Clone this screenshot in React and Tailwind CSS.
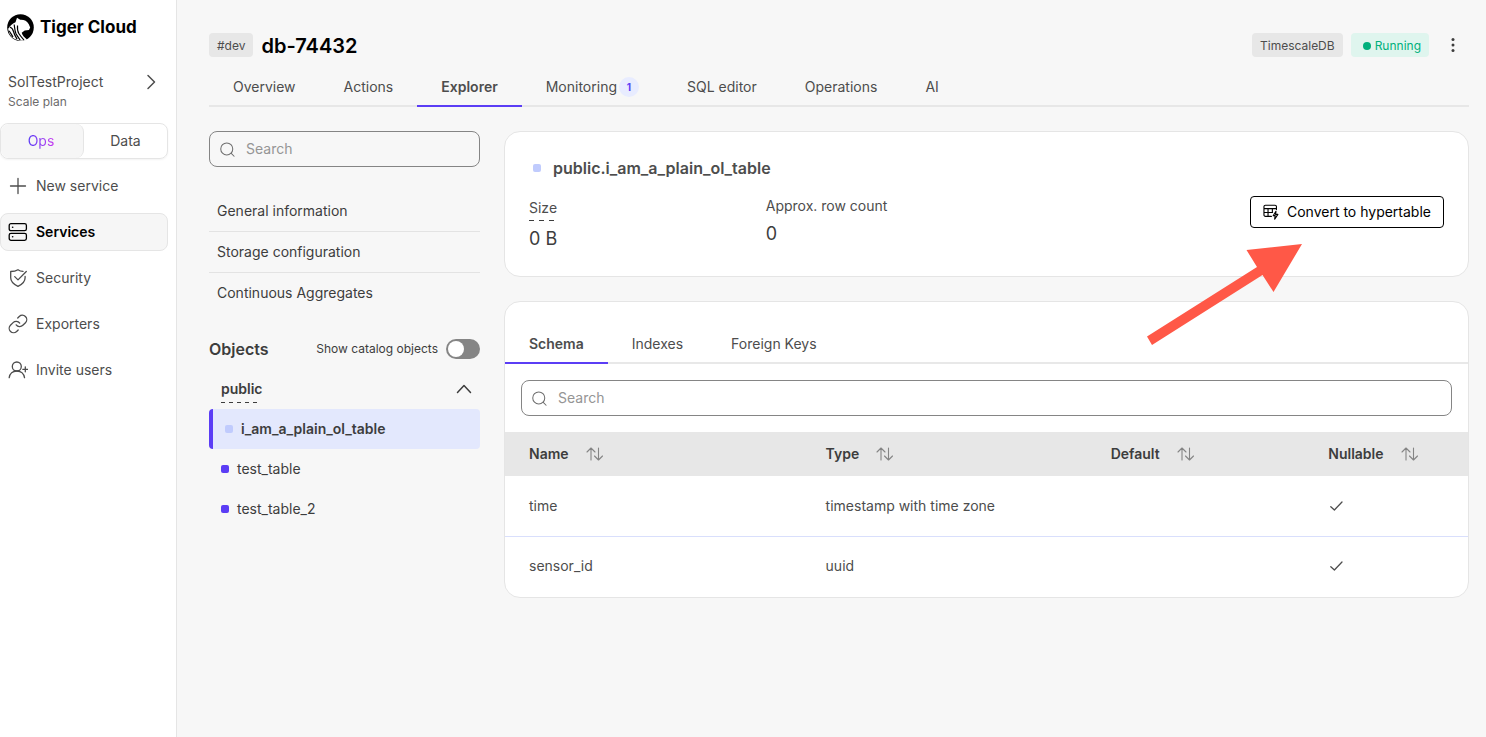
import React, { useState } from "react";

const columns = [
  { name: "Name", width: "w-[30.8%]" },
  { name: "Type", width: "w-[29.6%]" },
  { name: "Default", width: "w-[22.6%]" },
  { name: "Nullable", width: "" },
];

const rows = [
  { name: "time", type: "timestamp with time zone", nullable: true },
  { name: "sensor_id", type: "uuid", nullable: true },
];

const Icon = ({ size = 20, stroke = 1.3, className = "", children }) => (
  <svg
    width={size}
    height={size}
    viewBox="0 0 20 20"
    fill="none"
    stroke="currentColor"
    strokeWidth={stroke}
    strokeLinecap="round"
    strokeLinejoin="round"
    aria-hidden="true"
    className={`shrink-0 ${className}`}
  >
    {children}
  </svg>
);

const menu = [
  {
    name: "New service",
    icon: <path d="M10 2.5v15M2.5 10h15" />,
  },
  {
    name: "Services",
    icon: (
      <>
        <rect x="1.2" y="1.7" width="17.2" height="7" rx="1.8" />
        <rect x="1.2" y="11.3" width="17.2" height="7" rx="1.8" />
        <path d="M4.6 5.2h.1M4.6 14.8h.1" strokeWidth="1.6" />
      </>
    ),
  },
  {
    name: "Security",
    icon: (
      <>
        <path d="M15 3.4C12.8 3.3 11.4 2.7 10 1.7 8 3 5.6 3.5 2.7 3.5v6.2c0 4 3.2 6.7 7.3 8.6 4.1-1.9 7.1-4.6 7.1-8.6V8.5" />
        <path d="M6.7 8.6l3.3 3.3 8.3-8.4" />
      </>
    ),
  },
  {
    name: "Exporters",
    icon: (
      <g transform="translate(-.6 -.6) scale(.88)" strokeWidth="1.5">
        <path d="M10 13a5 5 0 0 0 7.540.54l3-3a5 5 0 0 0-7.070-7.070l-1.720 1.710" />
        <path d="M14 11a5 5 0 0 0-7.540-.54l-3 3a5 5 0 0 0 7.070 7.070l1.710-1.710" />
      </g>
    ),
  },
  {
    name: "Invite users",
    icon: (
      <>
        <circle cx="8.8" cy="6.5" r="4.5" />
        <path d="M1.2 17.7c.5-4 3.6-6.7 7.6-6.7s7.2 2.7 7.7 6.7M14.8 9.3h5M17.3 6.8v5" />
      </>
    ),
  },
];

const Logo = () => (
  <svg width="27" height="27" viewBox="0 0 27 27" aria-hidden="true" className="shrink-0">
    <circle cx="13.5" cy="13.5" r="13.3" fill="#000" />
    <path
      d="M10 3.8l3.2 1.9c4-.2 6.8 1.1 8.6 4.6l1.4 3.2-1.2 2.6-4.3.4-3 2.200c.6 2.400 2.400 4.400 5.300 6.800l-1.500.9C15 27.500 8 26.500 4.500 22.500 2.500 20.500 1.300 17.500 1.200 14.800 3 11.500 6 9.500 8.500 8.200z"
      fill="#fff"
    />
    <path
      d="M10.500 11.500c-.2 3-.3 5.500 1.300 8 1.200 2 3 4 5.200 6.500M7.200 10.500c.4 3 .5 6 1.600 8.700 1 2.300 2.500 4.200 4.400 6.800M2.800 13c2.300.7 3.200 2.300 3.700 4.500.7 3 2.200 5.200 3.600 7.700M1.600 16.800c1.800 1.200 2.400 3.400 4.400 6.200"
      fill="none"
      stroke="#000"
      strokeWidth="1.2"
    />
  </svg>
);

const SearchBox = ({ label }) => (
  <label className="flex h-9 items-center rounded-lg border border-[#858585] pl-2.5">
    <Icon size={15} stroke={1.4} className="text-[#6f6f6f]">
      <circle cx="9" cy="9.2" r="8" />
      <path d="M15 15.2l3.8 3.8" />
    </Icon>
    <span className="sr-only">{label}</span>
    <input
      type="text"
      placeholder="Search"
      className="h-6 min-w-0 flex-1 bg-transparent px-[11px] text-sm leading-6 outline-none placeholder:text-[#959595]"
    />
  </label>
);

const Tab = ({ name, active, onClick, children }) => (
  <button
    type="button"
    onClick={onClick}
    className={`-mb-0.5 flex h-10 items-center border-b-2 px-6 pt-0.5 text-sm text-[#4d4d4d] ${
      active ? "border-[#5b3df5] font-semibold" : "border-transparent"
    }`}
  >
    {name}
    {children}
  </button>
);

const Sidebar = () => (
  <aside className="w-[177px] shrink-0 border-r border-[#e5e5e5] bg-white pr-2 text-sm text-[#4d4d4d]">
    <div className="mt-3.5 flex items-center gap-1.5 pl-[7px] text-black">
      <Logo />
      <span className="text-[17px] leading-[27px] font-bold">Tiger Cloud</span>
    </div>

    <button type="button" className="mt-[31px] flex w-full justify-between pr-[7px] pl-2 text-left">
      <span>
        <span className="block leading-5">SolTestProject</span>
        <span className="block text-xs leading-5 text-[#6b6b6b]">Scale plan</span>
      </span>
      <Icon stroke={1.5}>
        <path d="M7 3.5l6.5 6.5L7 16.5" />
      </Icon>
    </button>

    <div className="mt-[11px] flex h-9 rounded-lg border border-[#e5e5e5] shadow-xs">
      <button type="button" className="w-1/2 rounded-lg border-r border-[#e5e5e5] bg-[#f6f6f6] pr-0.5">
        <span className="bg-linear-to-r from-[#5b3df5] to-[#c63bf0] bg-clip-text text-transparent">Ops</span>
      </button>
      <button type="button" className="w-1/2">Data</button>
    </div>

    <nav className="mt-2 flex flex-col gap-2">
      {menu.map(({ name, icon }) => (
        <a
          key={name}
          href="#"
          className={`flex h-[38px] items-center gap-2 rounded-lg border pl-[7px] ${
            name === "Services"
              ? "border-[#e5e5e5] bg-[#f6f6f6] font-semibold text-black"
              : "border-transparent"
          }`}
        >
          <Icon>{icon}</Icon>
          {name}
        </a>
      ))}
    </nav>
  </aside>
);

const ObjectList = () => {
  const [showCatalog, setShowCatalog] = useState(false);

  return (
    <div className="w-[271px] shrink-0 text-sm text-[#3d3d3d]">
      <SearchBox label="Search objects" />

      <ul className="mt-6 divide-y divide-[#e3e3e3]">
        {["General information", "Storage configuration", "Continuous Aggregates"].map((item) => (
          <li key={item}>
            <a href="#" className="flex h-10 items-center px-2">{item}</a>
          </li>
        ))}
      </ul>

      <div className="mt-5 flex h-8 items-center justify-between">
        <h2 className="text-base font-semibold">Objects</h2>
        <label className="flex items-center gap-2 text-xs">
          Show catalog objects
          <input
            type="checkbox"
            role="switch"
            checked={showCatalog}
            onChange={(e) => setShowCatalog(e.target.checked)}
            className="h-5 w-[34px] appearance-none rounded-full bg-[#858585] p-0.5 before:block before:size-4 before:rounded-full before:bg-white checked:bg-[#5b3df5] checked:before:translate-x-3.5"
          />
        </label>
      </div>

      <button type="button" className="mt-1 flex h-10 w-full items-center justify-between pr-1.5 pl-3">
        <span className="bg-[repeating-linear-gradient(90deg,#3d3d3d_0_4px,transparent_4px_8px)] bg-[length:37px_1px] bg-bottom-left bg-no-repeat py-1 font-semibold">
          public
        </span>
        <Icon stroke={1.5}>
          <path d="M3.5 13.5l6.5-7 6.5 7" />
        </Icon>
      </button>
      <a
        href="#"
        className="flex h-10 items-center gap-2 rounded border-l-4 border-[#5b3df5] bg-[#e3e8fd] pl-3 font-semibold"
      >
        <span className="size-2 rounded-xs bg-[#c0cbfd]" />
        i_am_a_plain_ol_table
      </a>
      {["test_table", "test_table_2"].map((table) => (
        <a key={table} href="#" className="flex h-10 items-center gap-2 pl-3">
          <span className="size-2 rounded-xs bg-[#5b3df5]" />
          {table}
        </a>
      ))}
    </div>
  );
};

const TableSummary = () => (
  <section className="rounded-2xl border border-[#e5e5e5] bg-white p-6 text-[#4d4d4d]">
    <div className="flex h-6 items-center gap-2">
      <span className="flex w-4 justify-center">
        <span className="size-2 rounded-xs bg-[#c0cbfd]" />
      </span>
      <h2 className="text-base font-semibold">public.i_am_a_plain_ol_table</h2>
    </div>
    <div className="mt-4 grid h-14 grid-cols-4 items-start gap-8 text-sm">
      <dl className="flex flex-col items-start gap-1">
        <dt className="bg-[repeating-linear-gradient(90deg,#3d3d3d_0_5px,transparent_5px_10px)] bg-[length:26px_1px] bg-bottom-left bg-no-repeat pb-px leading-6">
          Size
        </dt>
        <dd className="text-lg leading-7 text-[#3d3d3d]">0 B</dd>
      </dl>
      <dl className="flex flex-col items-start gap-1">
        <dt className="leading-5">Approx. row count</dt>
        <dd className="text-lg leading-7 text-[#3d3d3d]">0</dd>
      </dl>
      <button
        type="button"
        className="col-span-2 flex h-8 items-center gap-2 justify-self-end rounded border border-black px-3 text-black"
      >
        <Icon size={16} stroke={1.4}>
          <path d="M10.5 15.5H3A1.800 1.800 0 0 1 1.200 13.700V3.300A1.800 1.800 0 0 1 3 1.500h12a1.800 1.800 0 0 1 1.800 1.800V7M1.200 5.800h15.600M1.200 10.700h10.800M6.300 5.800v9.700M11.700 5.800v4" />
          <path d="M16.200 9l-3.500 5.600h2.500L14.600 19l4-6h-2.800z" />
        </Icon>
        Convert to hypertable
      </button>
    </div>
  </section>
);

const TableDetails = () => {
  const [tab, setTab] = useState("Schema");

  return (
    <section className="overflow-hidden rounded-2xl border border-[#e5e5e5] bg-white pb-px text-sm text-[#4d4d4d]">
      <div className="mt-[22px] flex border-b-2 border-[#e8e8e8]">
        {["Schema", "Indexes", "Foreign Keys"].map((name) => (
          <Tab key={name} name={name} active={tab === name} onClick={() => setTab(name)} />
        ))}
      </div>
      <div className="p-4">
        <SearchBox label="Search columns" />
      </div>
      <table className="w-full table-fixed text-left">
        <thead className="bg-[#e7e7e7] text-[#3d3d3d]">
          <tr className="h-11">
            {columns.map(({ name, width }) => (
              <th key={name} className={`pl-6 font-semibold ${width}`}>
                <span className="flex items-center gap-4">
                  {name}
                  <Icon stroke={1.1} className="text-[#858585]">
                    <path d="M6 16V4M2 8l4-4 4 4M13.5 4v12M9.5 12l4 4 4-4" />
                  </Icon>
                </span>
              </th>
            ))}
          </tr>
        </thead>
        <tbody className="divide-y divide-[#d9dffc]">
          {rows.map(({ name, type, nullable }) => (
            <tr key={name} className="h-[60px]">
              <td className="pl-6">{name}</td>
              <td className="pl-6">{type}</td>
              <td className="pl-6"></td>
              <td className="pl-6">
                {nullable && (
                  <Icon size={16} stroke={1.6}>
                    <path d="M3.5 11l4.5 4L17.5 5" />
                  </Icon>
                )}
              </td>
            </tr>
          ))}
        </tbody>
      </table>
    </section>
  );
};

const App = () => {
  const [tab, setTab] = useState("Explorer");
  const tabs = ["Overview", "Actions", "Explorer", "Monitoring", "SQL editor", "Operations", "AI"];

  return (
    <div className="flex min-h-screen bg-[#f7f7f7] font-['Inter',sans-serif]">
      <Sidebar />
      <main className="min-w-0 flex-1 pt-[33px] pr-[17px] pl-8">
        <header className="flex h-6 items-center gap-2 pr-2 text-xs">
          <span className="flex h-6 items-center rounded bg-[#e7e7e7] px-2 pt-px text-[#4d4d4d]">#dev</span>
          <h1 className="mr-auto pt-px text-xl font-semibold text-black">db-74432</h1>
          <span className="flex h-6 items-center rounded bg-[#e7e7e7] px-2 pt-px text-[#4d4d4d]">TimescaleDB</span>
          <span className="flex h-6 items-center gap-1 rounded bg-[#dff5ee] pt-px pr-2 pl-3 text-[#00b07c]">
            <span className="size-2 rounded-full bg-[#00b07c]" />
            Running
          </span>
          <button type="button" aria-label="More options" className="ml-2 text-[#3d3d3d]">
            <svg width="16" height="16" viewBox="0 0 16 16" fill="currentColor" aria-hidden="true">
              <circle cx="8" cy="2.5" r="1.5" />
              <circle cx="8" cy="8" r="1.5" />
              <circle cx="8" cy="13.5" r="1.5" />
            </svg>
          </button>
        </header>

        <nav className="mt-2.5 flex border-b-2 border-[#e7e7e7]">
          {tabs.map((name) => (
            <Tab key={name} name={name} active={tab === name} onClick={() => setTab(name)}>
              {name === "Monitoring" && (
                <span className="ml-0.5 flex size-5 items-center justify-center rounded-full bg-[#e8ecff] text-[10px] font-bold text-[#5b3df5]">
                  1
                </span>
              )}
            </Tab>
          ))}
        </nav>

        <div className="mt-6 flex items-start gap-6">
          <ObjectList />
          <div className="relative flex min-w-0 flex-1 flex-col gap-6">
            <TableSummary />
            <TableDetails />
            {/* callout arrow pointing at the convert button */}
            <svg
              width="155"
              height="101"
              viewBox="0 0 155 101"
              aria-hidden="true"
              className="pointer-events-none absolute top-[113px] right-[167px]"
            >
              <path d="M155 0L99.5 6l10.5 17L0 92.5l5 8.5 110.5-70 11 17z" fill="#ff5847" />
            </svg>
          </div>
        </div>
      </main>
    </div>
  );
};

export default App;
